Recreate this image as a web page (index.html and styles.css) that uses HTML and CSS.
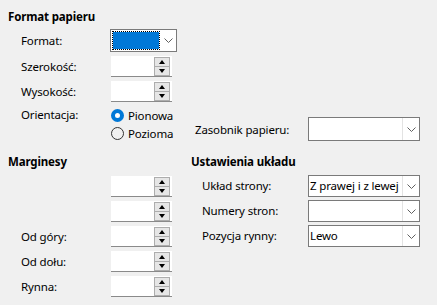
FILE: index.html
```html
<!DOCTYPE html>
<html lang="pl">
<head>
<meta charset="UTF-8">
<title>Strona</title>
<link rel="stylesheet" href="styles.css">
</head>
<body>
    <div class="dialog">
        <section class="paper">
            <div class="paper-main">
                <h2 class="heading">Format papieru</h2>
                <div class="paper-grid">
                    <label class="lbl">Format:</label>
                    <div class="combo combo-format">
                        <span class="combo-value focused"></span>
                        <span class="combo-btn"><svg width="9" height="5" viewBox="0 0 9 5"><polyline points="0.5,0.5 4.5,4.5 8.5,0.5" fill="none" stroke="#606060"/></svg></span>
                    </div>
                    <label class="lbl">Szerokość:</label>
                    <div class="spin">
                        <span class="spin-field"></span>
                        <span class="spin-btns"><span class="spin-up"><i class="tri-up"></i></span><span class="spin-down"><i class="tri-down"></i></span></span>
                    </div>
                    <label class="lbl">Wysokość:</label>
                    <div class="spin">
                        <span class="spin-field"></span>
                        <span class="spin-btns"><span class="spin-up"><i class="tri-up"></i></span><span class="spin-down"><i class="tri-down"></i></span></span>
                    </div>
                    <label class="lbl lbl-top">Orientacja:</label>
                    <div class="radios">
                        <div class="radio checked"><span class="radio-dot"></span>Pionowa</div>
                        <div class="radio"><span class="radio-dot"></span>Pozioma</div>
                    </div>
                </div>
            </div>
            <div class="paper-tray">
                <label class="tray-lbl">Zasobnik papieru:</label>
                <div class="combo combo-wide combo-tray">
                    <span class="combo-value"></span>
                    <span class="combo-btn"><svg width="9" height="5" viewBox="0 0 9 5"><polyline points="0.5,0.5 4.5,4.5 8.5,0.5" fill="none" stroke="#606060"/></svg></span>
                </div>
            </div>
        </section>

        <section class="lower">
            <div class="margins">
                <h2 class="heading">Marginesy</h2>
                <div class="margin-grid">
                    <label class="lbl"></label>
                    <div class="spin">
                        <span class="spin-field"></span>
                        <span class="spin-btns"><span class="spin-up"><i class="tri-up"></i></span><span class="spin-down"><i class="tri-down"></i></span></span>
                    </div>
                    <label class="lbl"></label>
                    <div class="spin">
                        <span class="spin-field"></span>
                        <span class="spin-btns"><span class="spin-up"><i class="tri-up"></i></span><span class="spin-down"><i class="tri-down"></i></span></span>
                    </div>
                    <label class="lbl">Od góry:</label>
                    <div class="spin">
                        <span class="spin-field"></span>
                        <span class="spin-btns"><span class="spin-up"><i class="tri-up"></i></span><span class="spin-down"><i class="tri-down"></i></span></span>
                    </div>
                    <label class="lbl">Od dołu:</label>
                    <div class="spin">
                        <span class="spin-field"></span>
                        <span class="spin-btns"><span class="spin-up"><i class="tri-up"></i></span><span class="spin-down"><i class="tri-down"></i></span></span>
                    </div>
                    <label class="lbl">Rynna:</label>
                    <div class="spin">
                        <span class="spin-field"></span>
                        <span class="spin-btns"><span class="spin-up"><i class="tri-up"></i></span><span class="spin-down"><i class="tri-down"></i></span></span>
                    </div>
                </div>
            </div>

            <div class="layout">
                <h2 class="heading">Ustawienia układu</h2>
                <div class="layout-grid">
                    <label class="lbl">Układ strony:</label>
                    <div class="combo combo-wide">
                        <span class="combo-value">Z prawej i z lewej</span>
                        <span class="combo-btn"><svg width="9" height="5" viewBox="0 0 9 5"><polyline points="0.5,0.5 4.5,4.5 8.5,0.5" fill="none" stroke="#606060"/></svg></span>
                    </div>
                    <label class="lbl">Numery stron:</label>
                    <div class="combo combo-wide">
                        <span class="combo-value"></span>
                        <span class="combo-btn"><svg width="9" height="5" viewBox="0 0 9 5"><polyline points="0.5,0.5 4.5,4.5 8.5,0.5" fill="none" stroke="#606060"/></svg></span>
                    </div>
                    <label class="lbl">Pozycja rynny:</label>
                    <div class="combo combo-wide">
                        <span class="combo-value">Lewo</span>
                        <span class="combo-btn"><svg width="9" height="5" viewBox="0 0 9 5"><polyline points="0.5,0.5 4.5,4.5 8.5,0.5" fill="none" stroke="#606060"/></svg></span>
                    </div>
                </div>
            </div>
        </section>
    </div>
</body>
</html>
```

FILE: styles.css
```css
body {
    margin: 0;
    background-color: #f0f0f0;
    font-family: "Segoe UI", "Noto Sans", sans-serif;
    font-size: 11.5px;
    letter-spacing: -0.15px;
    color: #000;
}
.dialog {
    padding: 9px 0 0 8px;
}
.heading {
    margin: 0;
    font-size: 11.5px;
    font-weight: bold;
    line-height: 16px;
}

/* Format papieru */
.paper {
    display: flex;
}
.paper-main {
    width: 169px;
}
.paper-grid {
    display: grid;
    grid-template-columns: 89px 67px;
    grid-template-rows: 23px 21px 21px 36px;
    row-gap: 4px;
    margin-top: 4px;
    padding-left: 13px;
}
.lbl {
    align-self: center;
    line-height: 16px;
    white-space: nowrap;
}
.lbl-top {
    align-self: start;
    line-height: 18px;
}
.radios {
    display: flex;
    flex-direction: column;
}
.radio {
    display: flex;
    align-items: center;
    height: 18px;
    gap: 4px;
    padding-left: 1px;
}
.radio-dot {
    box-sizing: border-box;
    width: 13px;
    height: 13px;
    border: 1px solid #333;
    border-radius: 50%;
}
.radio.checked .radio-dot {
    border: 4px solid #0078d7;
    background-color: #fff;
}
.paper-tray {
    display: flex;
    align-items: center;
    align-self: flex-end;
    margin: 0 0 1px 18px;
}
.tray-lbl {
    width: 113px;
}

/* combo boxes */
.combo {
    box-sizing: border-box;
    display: flex;
    height: 23px;
    border: 1px solid #7a7a7a;
    background-color: #fff;
}
.combo-wide {
    width: 112px;
    height: 22px;
}
.combo-tray {
    height: 24px;
}
.combo-value {
    flex: 1;
    padding-left: 1px;
    line-height: 20px;
    white-space: nowrap;
    overflow: hidden;
}
.combo-value.focused {
    margin: 1px 0 1px 1px;
    border: 1px dotted #000;
    background: linear-gradient(#0078d7, #0078d7) padding-box, #fff;
}
.combo-btn {
    width: 16px;
    display: flex;
    align-items: center;
    justify-content: center;
    border-left: 1px solid #e3e3e3;
}
.combo-format .combo-btn {
    border-left: none;
}

/* spin fields */
.spin {
    box-sizing: border-box;
    display: flex;
    width: 61px;
    height: 21px;
    margin-left: 1px;
    background-color: #fff;
    border-bottom: 1px solid #8a8a8a;
}
.spin-field {
    flex: 1;
}
.spin-btns {
    display: flex;
    flex-direction: column;
    margin: 1px 2px 0 0;
}
.spin-up,
.spin-down {
    box-sizing: border-box;
    width: 16px;
    height: 10px;
    border: 1px solid #adadad;
    background-color: #e6e6e6;
    display: flex;
    align-items: center;
    justify-content: center;
}
.spin-down {
    border-top: none;
    height: 9px;
}
.tri-up {
    border-left: 3px solid transparent;
    border-right: 3px solid transparent;
    border-bottom: 4px solid #000;
}
.tri-down {
    border-left: 3px solid transparent;
    border-right: 3px solid transparent;
    border-top: 4px solid #000;
}

/* Marginesy i Ustawienia układu */
.lower {
    display: flex;
    margin-top: 12px;
}
.margins {
    width: 183px;
}
.margin-grid {
    display: grid;
    grid-template-columns: 89px 62px;
    grid-auto-rows: 21px;
    row-gap: 4px;
    margin-top: 6px;
    padding-left: 13px;
}
.layout-grid {
    display: grid;
    grid-template-columns: 106px 112px;
    grid-auto-rows: 22px;
    row-gap: 3px;
    margin-top: 5px;
    padding-left: 11px;
}
```
